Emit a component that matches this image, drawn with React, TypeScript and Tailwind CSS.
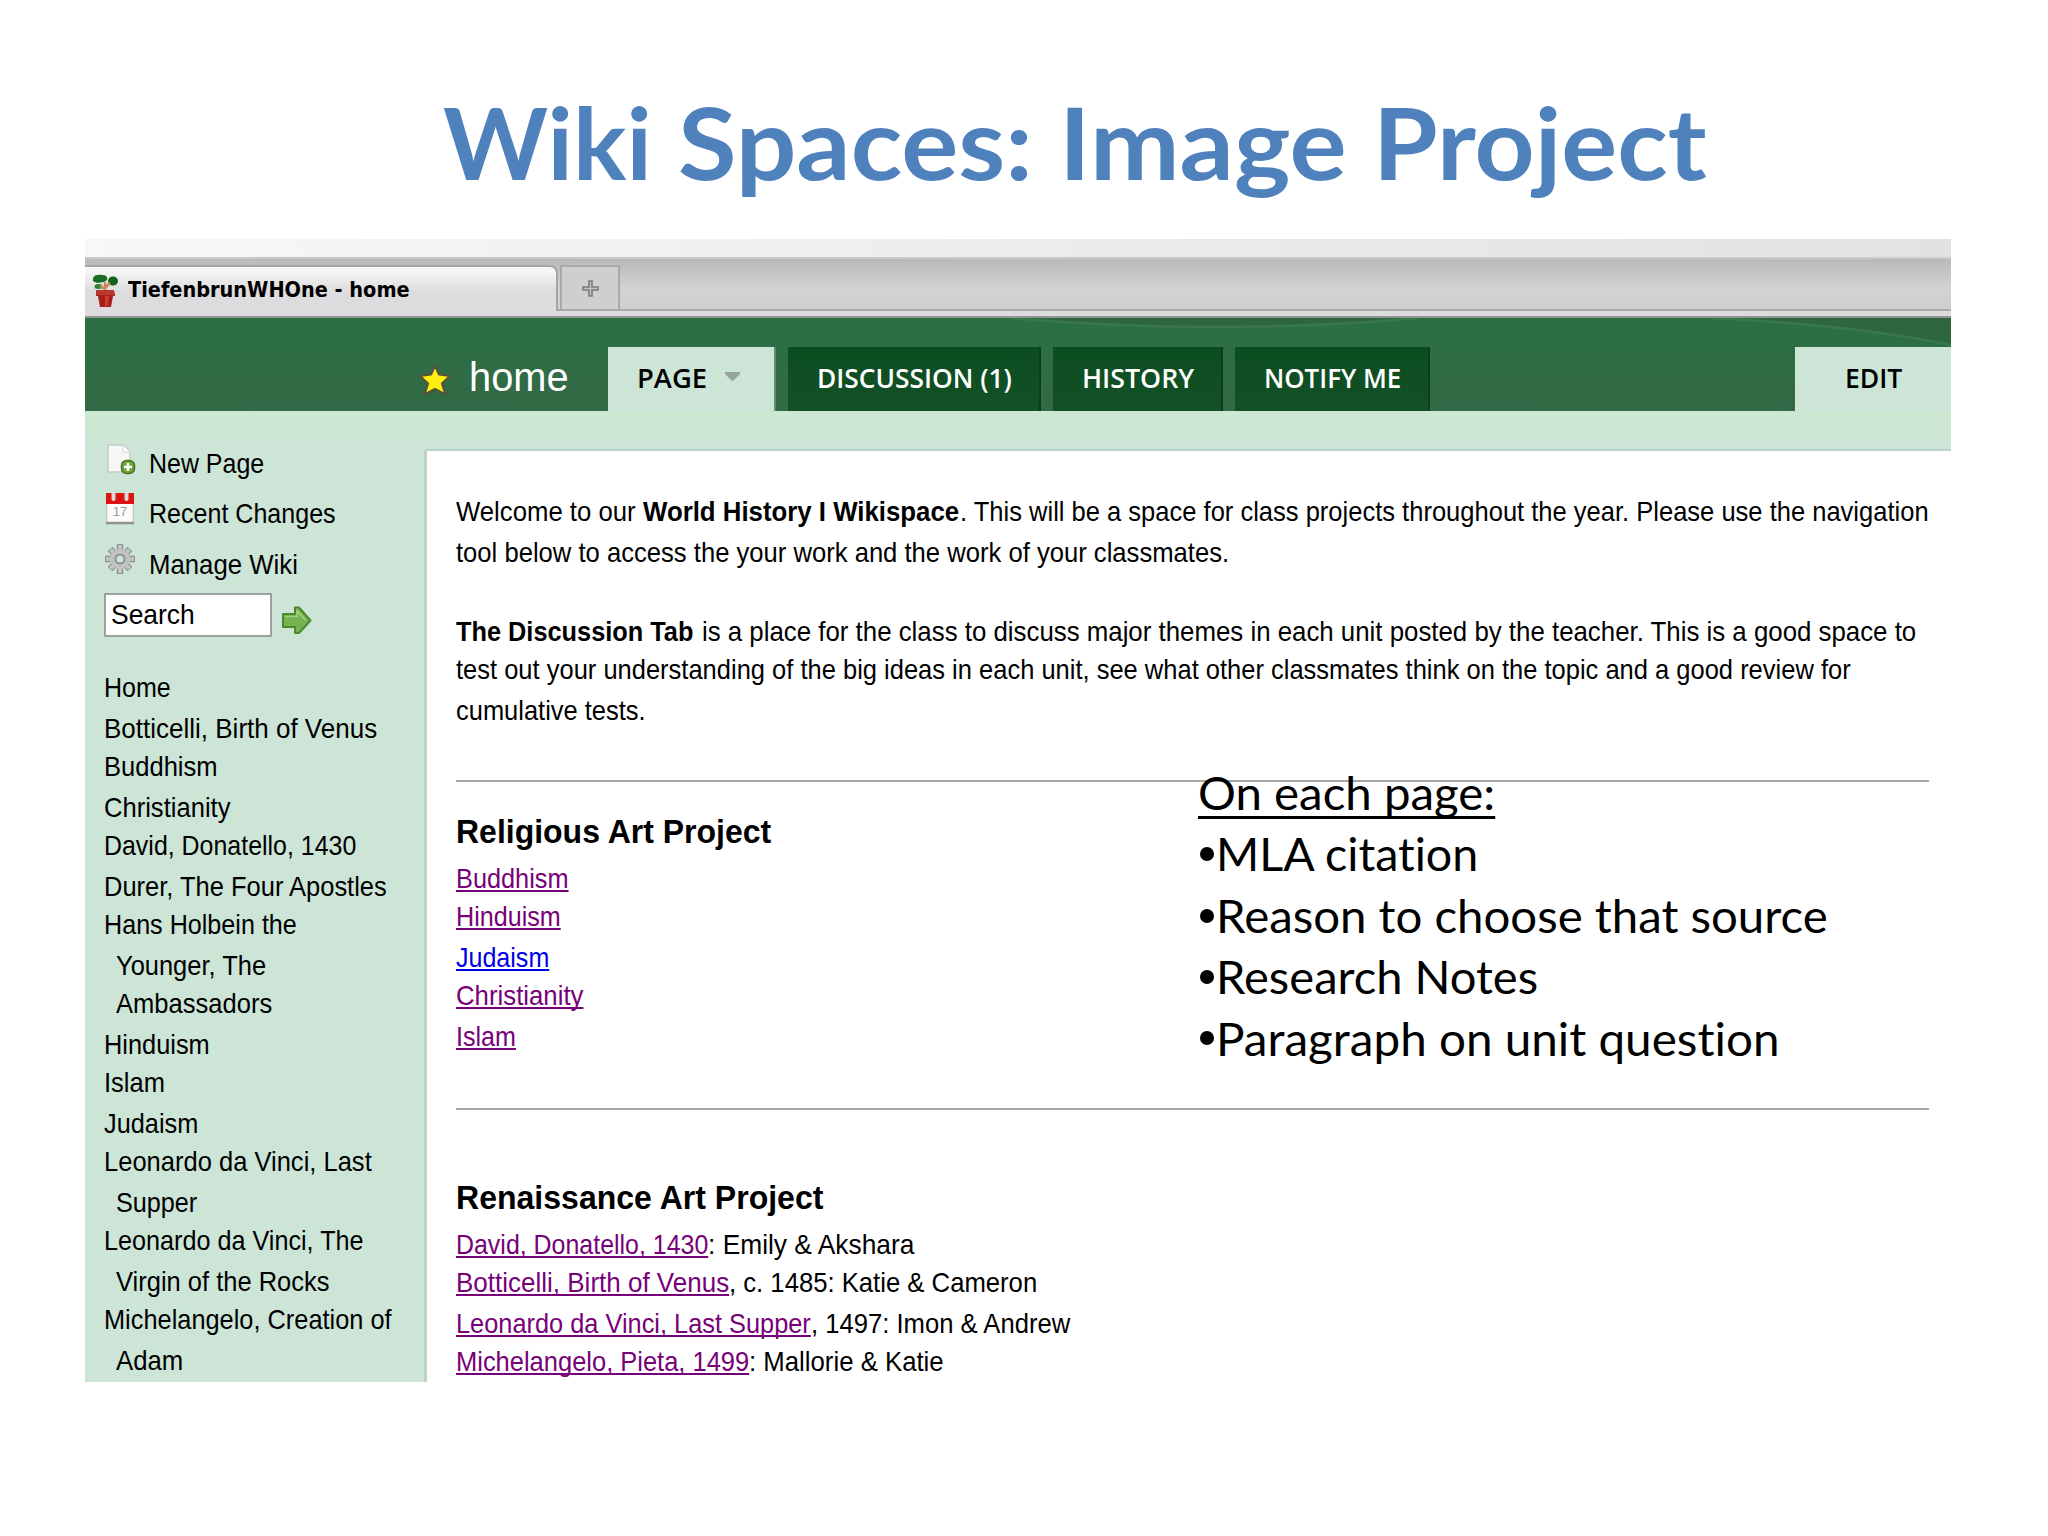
import { ReactNode, useLayoutEffect, useRef, useState } from 'react';
import { clsx } from 'clsx';

interface FitProps {
    width: number;
    className?: string;
    children: ReactNode;
}

// Condenses or stretches a run of text so that it takes exactly `width` pixels.
function Fit({ width, className, children }: FitProps) {
    const ref = useRef<HTMLSpanElement>(null);
    const [scale, setScale] = useState(1);

    useLayoutEffect(() => {
        if (ref.current) {
            setScale(width / ref.current.offsetWidth);
        }
    }, [width]);

    return (
        <span className="block shrink-0" style={{ width }}>
            <span
                ref={ref}
                className={clsx(
                    'inline-block origin-left whitespace-nowrap align-top',
                    className,
                )}
                style={{ transform: `scaleX(${scale})` }}
            >
                {children}
            </span>
        </span>
    );
}

const NAV_ITEMS = [
    { label: 'Home', width: 67 },
    { label: 'Botticelli, Birth of Venus', width: 273 },
    { label: 'Buddhism', width: 114 },
    { label: 'Christianity', width: 126 },
    { label: 'David, Donatello, 1430', width: 252 },
    { label: 'Durer, The Four Apostles', width: 283 },
    { label: 'Hans Holbein the', width: 193 },
    { label: 'Younger, The', width: 150, indent: true },
    { label: 'Ambassadors', width: 156, indent: true },
    { label: 'Hinduism', width: 106 },
    { label: 'Islam', width: 61 },
    { label: 'Judaism', width: 94 },
    { label: 'Leonardo da Vinci, Last', width: 268 },
    { label: 'Supper', width: 81, indent: true },
    { label: 'Leonardo da Vinci, The', width: 260 },
    { label: 'Virgin of the Rocks', width: 214, indent: true },
    { label: 'Michelangelo, Creation of', width: 288 },
    { label: 'Adam', width: 67, indent: true },
];

const RELIGIOUS_LINKS = [
    { label: 'Buddhism', width: 113 },
    { label: 'Hinduism', width: 105 },
    { label: 'Judaism', width: 93, unread: true },
    { label: 'Christianity', width: 127 },
    { label: 'Islam', width: 60 },
];

const RENAISSANCE_LINKS = [
    {
        label: 'David, Donatello, 1430',
        width: 252,
        rest: ': Emily & Akshara',
        restWidth: 206,
    },
    {
        label: 'Botticelli, Birth of Venus',
        width: 273,
        rest: ', c. 1485: Katie & Cameron',
        restWidth: 308,
    },
    {
        label: 'Leonardo da Vinci, Last Supper',
        width: 355,
        rest: ', 1497: Imon & Andrew',
        restWidth: 259,
    },
    {
        label: 'Michelangelo, Pieta, 1499',
        width: 293,
        rest: ': Mallorie & Katie',
        restWidth: 195,
    },
];

const NOTES = [
    { label: 'MLA citation', width: 262 },
    { label: 'Reason to choose that source', width: 612 },
    { label: 'Research Notes', width: 322 },
    { label: 'Paragraph on unit question', width: 564 },
];

export default function App() {
    return (
        <div className="relative h-[1536px] w-[2048px] overflow-hidden bg-white font-['Liberation_Sans',sans-serif] text-black">
            <h1 className="flex h-[239px] gap-[26px] pt-[73px] pl-[443px] font-['Lato',sans-serif] text-[100px] leading-[136px] font-bold text-[#4f81bd]">
                <Fit width={209}>Wiki</Fit>
                <Fit width={355}>Spaces:</Fit>
                <Fit width={288}>Image</Fit>
                <Fit width={334}>Project</Fit>
            </h1>

            <div className="ml-[85px] flex h-[1143px] w-[1866px] flex-col overflow-hidden">
                <BrowserTabs />
                <WikiHeader />

                <div className="flex flex-1 bg-[#cde5d7]">
                    <Sidebar />
                    <Content />
                </div>
            </div>

            <Notes />
        </div>
    );
}

function BrowserTabs() {
    return (
        <div className="h-[79px] shrink-0">
            <div className="h-[18px] bg-linear-to-r from-[#f8f8f8] to-[#e2e1e3]" />
            <div className="flex h-[54px] border-t-2 border-[#c9c8ca] bg-linear-to-b from-[#b9b8ba] via-[#d4d3d5] via-60% to-[#cdccce] pt-[6px] shadow-[inset_0_-2px_0_#aaa9ab]">
                <div className="flex h-[46px] w-[473px] shrink-0 items-start rounded-tr-lg border-t-2 border-r-2 border-t-[#a5a4a6] border-r-[#a5a4a6] bg-linear-to-b from-[#f6f6f6] from-10% via-[#dddcde] via-55% to-[#dddbde] pt-[7px] pl-2">
                    <PlantIcon />
                    <div className="ml-[10px] font-['DejaVu_Sans',sans-serif] text-[22px] leading-[32px] font-bold">
                        <Fit width={282}>TiefenbrunWHOne - home</Fit>
                    </div>
                </div>
                <div className="ml-[2px] flex h-[46px] w-[60px] items-center justify-center border-2 border-[#aaa9ab] bg-[#cfced0]">
                    <svg className="size-[17px]" viewBox="0 0 17 17">
                        <path
                            d="M7 1h3v6h6v3h-6v6H7v-6H1V7h6z"
                            fill="#c4c3c5"
                            stroke="#7b7a7c"
                            strokeWidth="1.6"
                        />
                    </svg>
                </div>
            </div>
            <div className="h-[7px] border-b-2 border-[#8f9691] bg-[#dddbde]" />
        </div>
    );
}

function WikiHeader() {
    return (
        <div className="flex h-[133px] shrink-0 flex-col bg-linear-to-b from-[#cce8d0] from-70% to-[#cde5d7]">
            <div className="relative flex h-[93px] items-end bg-linear-to-b from-[#2a7043] to-[#336946]">
                <svg
                    className="absolute top-0 left-0 h-[93px] w-[1866px]"
                    viewBox="0 0 1866 93"
                >
                    <path d="M925 0Q1130 18 1335 0z" fill="#2e673f" />
                    <path d="M1640 0Q1760 6 1866 26V0z" fill="#2e673f" />
                    <path
                        d="M925 0Q1130 18 1335 0M1625 0Q1760 6 1866 27"
                        fill="none"
                        stroke="#3a774d"
                        strokeWidth="2.5"
                    />
                </svg>

                <div className="relative flex h-[64px] items-start pl-[334px]">
                    <StarIcon />
                    <div className="ml-[18px] text-[41px] leading-[61px] text-white">
                        <Fit width={100}>home</Fit>
                    </div>
                </div>

                <div className="relative ml-[39px] flex h-[64px] gap-3 font-['Open_Sans',sans-serif] text-[27px] leading-[61px] font-semibold text-white">
                    <div className="flex w-[168px] border-r-2 border-[#5f8f70] bg-[#cde5d7] pl-[29px] text-black">
                        <Fit width={70}>PAGE</Fit>
                        <svg
                            className="mt-[24px] ml-[18px] h-[11px] w-[15px]"
                            viewBox="0 0 15 11"
                        >
                            <path d="M0 1h15v2L8 10H7L0 3z" fill="#97a49c" />
                        </svg>
                    </div>
                    <HeaderTab className="w-[253px]">
                        <Fit width={195}>DISCUSSION (1)</Fit>
                    </HeaderTab>
                    <HeaderTab className="w-[170px]">
                        <Fit width={112}>HISTORY</Fit>
                    </HeaderTab>
                    <HeaderTab className="w-[195px]">
                        <Fit width={137}>NOTIFY ME</Fit>
                    </HeaderTab>
                </div>

                <div className="relative ml-auto flex h-[64px] w-[156px] bg-[#cde5d7] pl-[50px] font-['Open_Sans',sans-serif] text-[27px] leading-[61px] font-semibold">
                    <Fit width={57}>EDIT</Fit>
                </div>
            </div>
            <div className="mt-auto ml-[340px] h-[2px] bg-[#bdd3c6]" />
        </div>
    );
}

function HeaderTab({
    className,
    children,
}: {
    className: string;
    children: ReactNode;
}) {
    return (
        <div
            className={clsx(
                'flex border-r-2 border-[#0a3f1c] bg-linear-to-b from-[#0b4d20] to-[#135127] pl-[29px]',
                className,
            )}
        >
            {children}
        </div>
    );
}

function Sidebar() {
    return (
        <div className="w-[342px] shrink-0 border-r-3 border-[#bdd3c6] pl-[19px] text-[28px] leading-[40px]">
            <div className="-mt-[7px] flex h-[50px]">
                <div className="w-[45px]">
                    <PageAddIcon />
                </div>
                <Fit width={115}>New Page</Fit>
            </div>
            <div className="flex h-[51px]">
                <div className="w-[45px]">
                    <CalendarIcon />
                </div>
                <Fit width={187}>Recent Changes</Fit>
            </div>
            <div className="flex h-[48px]">
                <div className="w-[45px]">
                    <GearIcon />
                </div>
                <Fit width={149}>Manage Wiki</Fit>
            </div>

            <div className="flex items-start">
                <div className="h-[44px] w-[168px] border-2 border-[#9aa39e] bg-white pl-[5px]">
                    <Fit width={84}>Search</Fit>
                </div>
                <ArrowIcon />
            </div>

            <div className="mt-[31px]">
                {NAV_ITEMS.map((item, index) => (
                    <div
                        key={item.label}
                        className={clsx(
                            index % 2 === 0 ? 'h-[41px]' : 'h-[38px]',
                            item.indent && 'pl-3',
                        )}
                    >
                        <Fit width={item.width}>{item.label}</Fit>
                    </div>
                ))}
            </div>
        </div>
    );
}

function Content() {
    return (
        <div className="h-[931px] flex-1 overflow-hidden bg-white pt-[41px] pr-[22px] pl-[29px] text-[28px] leading-[40px]">
            <div className="flex h-[41px]">
                <Fit width={180}>Welcome to our</Fit>
                <Fit width={316} className="ml-[7px] font-bold">
                    World History I Wikispace
                </Fit>
                <Fit width={969} className="ml-[8px]">
                    . This will be a space for class projects throughout the
                    year. Please use the navigation
                </Fit>
            </div>
            <div className="h-[79px]">
                <Fit width={773}>
                    tool below to access the your work and the work of your
                    classmates.
                </Fit>
            </div>
            <div className="flex h-[38px]">
                <Fit width={237} className="font-bold">
                    The Discussion Tab
                </Fit>
                <Fit width={1214} className="ml-[9px]">
                    is a place for the class to discuss major themes in each
                    unit posted by the teacher. This is a good space to
                </Fit>
            </div>
            <div className="h-[41px]">
                <Fit width={1395}>
                    test out your understanding of the big ideas in each unit,
                    see what other classmates think on the topic and a good
                    review for
                </Fit>
            </div>
            <div className="h-[41px]">
                <Fit width={190}>cumulative tests.</Fit>
            </div>

            <hr className="mt-[48px] border-t-2 border-[#a6a6a6]" />

            <h2 className="mt-[30px] text-[33px] leading-[40px] font-bold">
                <Fit width={315}>Religious Art Project</Fit>
            </h2>
            <div className="mt-[7px]">
                {RELIGIOUS_LINKS.map((link, index) => (
                    <div
                        key={link.label}
                        className={index % 2 === 0 ? 'h-[38px]' : 'h-[41px]'}
                    >
                        <Fit
                            width={link.width}
                            className={clsx(
                                'underline decoration-2 underline-offset-2 [text-decoration-skip-ink:none]',
                                link.unread
                                    ? 'text-[#0000e6]'
                                    : 'text-[#780078]',
                            )}
                        >
                            {link.label}
                        </Fit>
                    </div>
                ))}
            </div>

            <hr className="mt-[53px] border-t-2 border-[#a6a6a6]" />

            <h2 className="mt-[68px] text-[33px] leading-[40px] font-bold">
                <Fit width={367}>Renaissance Art Project</Fit>
            </h2>
            <div className="mt-[7px]">
                {RENAISSANCE_LINKS.map((link, index) => (
                    <div
                        key={link.label}
                        className={clsx(
                            'flex',
                            index % 2 === 0 ? 'h-[38px]' : 'h-[41px]',
                        )}
                    >
                        <Fit
                            width={link.width}
                            className="text-[#780078] underline decoration-2 underline-offset-2 [text-decoration-skip-ink:none]"
                        >
                            {link.label}
                        </Fit>
                        <Fit width={link.restWidth}>{link.rest}</Fit>
                    </div>
                ))}
            </div>
        </div>
    );
}

// Sits over the lower part of the wiki page, across its first rule.
function Notes() {
    return (
        <div className="absolute top-[762px] left-[1198px] font-['Lato',sans-serif] text-[45.5px] leading-[61.4px] [font-variant-ligatures:none]">
            <Fit
                width={297}
                className="underline decoration-3 underline-offset-[6px] [text-decoration-skip-ink:none]"
            >
                On each page:
            </Fit>
            {NOTES.map((note) => (
                <div key={note.label} className="flex">
                    <div className="flex w-[18px] items-center pl-[2px]">
                        <div className="size-[14px] rounded-full bg-black" />
                    </div>
                    <Fit width={note.width}>{note.label}</Fit>
                </div>
            ))}
        </div>
    );
}

function PlantIcon() {
    return (
        <svg className="h-[34px] w-[25px]" viewBox="0 0 25 34">
            <path
                d="M0 4c1-3 5-4 9-3 4 0 6 2 5 5-3 3-11 4-14 1z"
                fill="#1c6b22"
            />
            <ellipse cx="20" cy="7" rx="5" ry="4.5" fill="#176119" />
            <ellipse cx="5.5" cy="12.500" rx="4" ry="2.5" fill="#2a8430" />
            <path
                d="M12 17V8M12 14l5-5M12 15l-5-3"
                stroke="#c98a55"
                strokeWidth="2.5"
                fill="none"
            />
            <path d="M3 17h18l1 5h-2l-2 11H7L5 22H3z" fill="#a91d1a" />
            <path d="M3 16h18l1 5H3z" fill="#b8382c" />
            <path d="M12 22h4l-1 10h-3z" fill="#c93a32" />
        </svg>
    );
}

function StarIcon() {
    return (
        <svg className="mt-[16px] h-[33px] w-[32px]" viewBox="0 0 32 33">
            <path
                d="M16 2.500l4 9 11 1.500-8 7.500 3.500 11L16 26 5.500 31.500 9 20.500 1 13l11-1.500z"
                fill="#ffee10"
                stroke="#55533a"
                strokeWidth="2.2"
                strokeLinejoin="round"
            />
        </svg>
    );
}

function PageAddIcon() {
    return (
        <svg className="ml-[3px] h-[32px] w-[30px]" viewBox="0 0 30 32">
            <path
                d="M1 1h15l7 7v20H1z"
                fill="#f6f7f6"
                stroke="#c3cbc6"
                strokeWidth="1.5"
            />
            <path d="M16 1v7h7z" fill="#fff" stroke="#d5d9d6" />
            <rect
                x="14.5"
                y="16.5"
                width="13"
                height="13"
                rx="5"
                fill="#6da53a"
                stroke="#44761f"
                strokeWidth="1.5"
            />
            <path d="M21 19v8M17 23h8" stroke="#fff" strokeWidth="2.6" />
        </svg>
    );
}

function CalendarIcon() {
    return (
        <svg className="-mt-[3px] ml-[2px] h-[34px] w-[28px]" viewBox="0 0 28 34">
            <rect
                x="0.8"
                y="3"
                width="26.4"
                height="29"
                fill="#fbfbfb"
                stroke="#b9bdba"
            />
            <rect y="2" width="28" height="11" fill="#dd1414" />
            <path
                d="M7.500 2v6M20.500 2v6"
                stroke="#d9d9d9"
                strokeWidth="4"
                strokeLinecap="round"
            />
            <path d="M0 32h28" stroke="#8f9390" strokeWidth="2.5" />
            <text
                x="14"
                y="25"
                textAnchor="middle"
                fontSize="13"
                fill="#9c9c9c"
            >
                17
            </text>
        </svg>
    );
}

function GearIcon() {
    return (
        <svg className="-mt-[2px] size-[32px]" viewBox="0 0 32 32">
            <g stroke="#8d918f" strokeWidth="6.500">
                <path d="M16 1v30M1 16h30M6 6l20 20M26 6L6 26" />
            </g>
            <g stroke="#c0c3c1" strokeWidth="4">
                <path d="M16 2v28M2 16h28M6.500 6.500l19 19M25.500 6.500l-19 19" />
            </g>
            <circle cx="16" cy="16" r="10" fill="#c0c3c1" />
            <circle
                cx="16"
                cy="16"
                r="4.500"
                fill="#cde5d7"
                stroke="#8d918f"
                strokeWidth="2"
            />
        </svg>
    );
}

function ArrowIcon() {
    return (
        <svg className="mt-[13px] ml-[10px] h-[29px] w-[30px]" viewBox="0 0 30 29">
            <path
                d="M1 8h12V1.500h4L28.500 14.500 17 27h-4v-6H1z"
                fill="#76b250"
                stroke="#4a8a2a"
                strokeWidth="2"
                strokeLinejoin="round"
            />
            <path
                d="M3 10.500h12V5l9 9.500"
                fill="none"
                stroke="#a3d083"
                strokeWidth="1.500"
            />
        </svg>
    );
}
